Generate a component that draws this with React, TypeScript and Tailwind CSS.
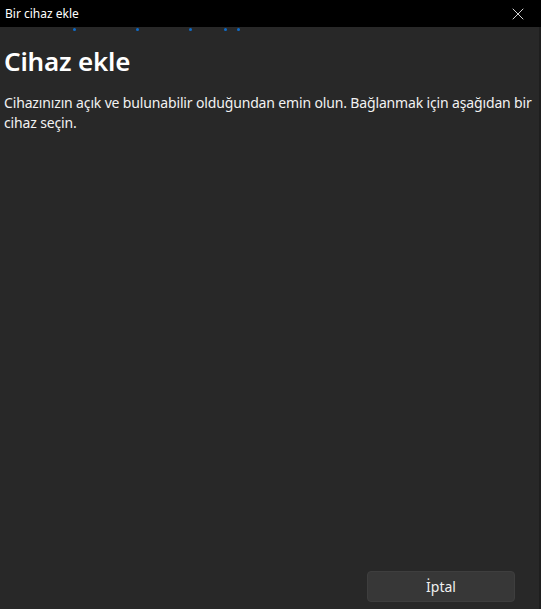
import { X } from "lucide-react"

const dots = [73, 136, 189, 224, 237]

export default function App() {
  return (
    <div className="flex h-[609px] w-[541px] flex-col bg-[#282828] font-['Segoe_UI','Noto_Sans',sans-serif] text-white">
      {/* Title bar */}
      <div className="flex h-[27px] shrink-0 items-center justify-between bg-black pl-[5px]">
        <span className="text-[12px] leading-none text-white">Bir cihaz ekle</span>
        <button className="flex h-[27px] w-[46px] items-center justify-center text-white">
          <X className="size-[20px]" strokeWidth={1} />
        </button>
      </div>

      {/* Content */}
      <div className="relative flex flex-1 flex-col border-r-2 border-[#1e1e1e] px-[4px]">
        {/* indeterminate progress dots */}
        {dots.map((x) => (
          <div
            key={x}
            className="absolute top-[1px] h-[3px] w-[3px] rounded-full bg-[#0f6cc8]"
            style={{ left: x }}
          />
        ))}

        <h1 className="mt-[16px] text-[26px] font-semibold leading-[36px] tracking-[-0.2px]">Cihaz ekle</h1>
        <p className="mt-[14px] max-w-[530px] text-[14px] leading-[20px] tracking-[-0.15px] text-[#f2f2f2]">
          Cihazınızın açık ve bulunabilir olduğundan emin olun. Bağlanmak için aşağıdan bir cihaz seçin.
        </p>

        <div className="mt-auto flex justify-end pb-[7px] pr-[20px]">
          <button className="h-[31px] w-[148px] rounded-[4px] border border-[#3e3e3e] bg-[#373737] text-[14px] text-[#f0f0f0]">
            İptal
          </button>
        </div>
      </div>
    </div>
  )
}
